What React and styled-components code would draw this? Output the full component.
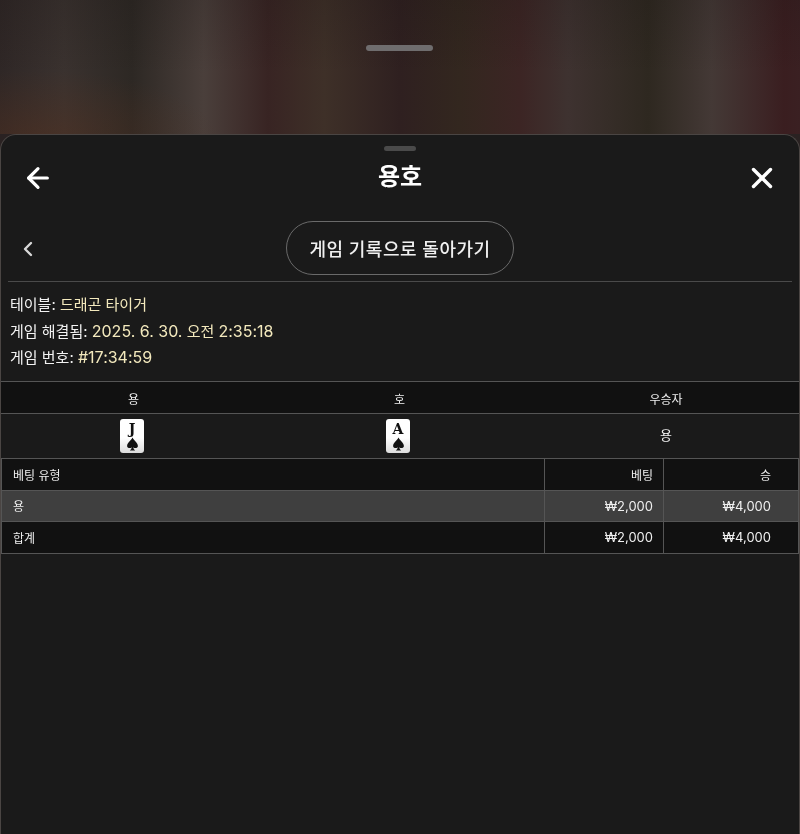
import React from 'react'
import styled, { createGlobalStyle } from 'styled-components'
import { ArrowLeft, ChevronLeft, X } from 'lucide-react'

const GlobalStyle = createGlobalStyle`
  * {
    box-sizing: border-box;
  }
  html, body {
    margin: 0;
    height: 100%;
    background: #1a1a1a;
  }
  body {
    font-family: Inter, "Noto Sans CJK KR", "Noto Sans", sans-serif;
    color: #fff;
    overflow: hidden;
  }
`

const Page = styled.div`
  width: 800px;
  height: 834px;
  display: flex;
  flex-direction: column;
  background: #2a2222;
`

const Backdrop = styled.div`
  height: 134px;
  padding-top: 45px;
  display: flex;
  justify-content: center;
  align-items: flex-start;
  background:
    radial-gradient(ellipse 180px 70px at 40px 140px, rgba(90, 50, 30, 0.45), transparent),
    linear-gradient(180deg, rgba(20, 15, 15, 0.16), transparent 55%),
    linear-gradient(
      90deg,
      #2f2726 0%,
      #3a322f 8%,
      #2d2824 16.5%,
      #4a3f3b 25.5%,
      #382423 33.5%,
      #3e3028 40.5%,
      #2f2020 50%,
      #33271f 57.5%,
      #3c2524 65%,
      #3e3230 71%,
      #2e2820 81%,
      #443936 89%,
      #3a1e20 98%,
      #3a2022 100%
    );
`

const Grabber = styled.div`
  width: ${(p) => p.$w}px;
  height: ${(p) => p.$h}px;
  margin-left: ${(p) => p.$shift || 0}px;
  border-radius: 3px;
  background: ${(p) => p.$color};
`

const Sheet = styled.section`
  flex: 1;
  display: flex;
  flex-direction: column;
  background: #1a1a1a;
  border: 1px solid #4a4543;
  border-bottom: 0;
  border-radius: 16px 16px 0 0;
  padding-top: 11px;
  will-change: transform;
`

const Handle = styled.div`
  display: flex;
  justify-content: center;
`

const Header = styled.header`
  height: 52px;
  padding: 2px 24px 0 24px;
  display: flex;
  align-items: center;
  justify-content: space-between;
  position: relative;
`

const Title = styled.h1`
  margin: 0;
  font-size: 24px;
  line-height: 32px;
  font-weight: 700;
  position: absolute;
  left: 0;
  right: 0;
  top: 10px;
  text-align: center;
  color: #fff;
`

const IconBtn = styled.button`
  width: 26px;
  height: 26px;
  padding: 0;
  border: 0;
  background: none;
  color: #fff;
  display: flex;
  align-items: center;
  justify-content: center;

  svg {
    flex-shrink: 0;
  }
`

const BackRow = styled.div`
  margin: 18px 7px 0;
  height: 61px;
  padding-bottom: 6px;
  border-bottom: 1px solid #4a4a4a;
  display: flex;
  align-items: center;
  justify-content: center;
  position: relative;
`

const Chevron = styled.span`
  position: absolute;
  left: 8px;
  top: 16px;
  color: #d8d8d8;
  display: flex;
`

const Pill = styled.button`
  width: 228px;
  height: 54px;
  padding: 4px 0 0;
  border: 1px solid #6a6a6a;
  border-radius: 27px;
  background: none;
  color: #f0f0f0;
  font: 500 18px/1 Inter, "Noto Sans CJK KR", sans-serif;
  letter-spacing: 0.5px;
`

const Info = styled.div`
  padding: 10px 9px 0;
  height: 99px;
`

const InfoLine = styled.p`
  margin: 0;
  font-size: 15px;
  line-height: 26.5px;
  color: #f2f2f2;
`

const Value = styled.span`
  color: #f3e9bd;
`

const Num = styled.span`
  font-size: 16px;
  line-height: 1;
`

const Table = styled.table`
  width: 100%;
  border-collapse: collapse;
  table-layout: fixed;
  font-size: 12px;
  color: #f0f0f0;
`

const RoundHead = styled.th`
  height: 32px;
  padding: 1px 0 0;
  font-weight: 400;
  background: #111;
  border-top: 1px solid #555;
  border-bottom: 1px solid #555;
`

const RoundCell = styled.td`
  height: 44px;
  padding: 0 ${(p) => (p.$card ? 3 : 0)}px 2px 0;
  text-align: center;
  font-size: 13px;
`

const CardRow = styled.div`
  display: flex;
  justify-content: center;
  padding-top: 2px;
`

const Card = styled.div`
  width: 24px;
  height: 34px;
  padding-top: 2px;
  border-radius: 3px;
  background: linear-gradient(180deg, #fff 55%, #dcdcdc 100%);
  color: #111;
  display: flex;
  flex-direction: column;
  align-items: center;
`

const Rank = styled.span`
  font: 700 14px/16px "DejaVu Serif", serif;
`

const Suit = styled.svg`
  width: 13px;
  height: 14px;
`

const BetCell = styled.td`
  height: ${(p) => p.$h || 31}px;
  padding: 0 ${(p) => (p.$wide ? 27 : p.$num ? 10 : 11)}px 0 11px;
  border: 1px solid #555;
  text-align: ${(p) => (p.$num ? 'right' : 'left')};
  font-size: ${(p) => (p.$amt ? 13 : 12)}px;
  background: ${(p) => (p.$active ? '#3f3f3f' : '#111')};
  color: #f0f0f0;
`

const Spade = () => (
  <Suit viewBox="0 0 24 26">
    <path
      fill="currentColor"
      d="M12 1C9 7 2 10.500 2 16.500c0 4 5.500 5.500 8.500 2.500-.3 2.800-1.500 4.600-3.500 6h10c-2-1.400-3.200-3.200-3.500-6 3 3 8.500 1.500 8.500-2.500C22 10.500 15 7 12 1z"
    />
  </Suit>
)

const PlayingCard = ({ rank }) => (
  <CardRow>
    <Card>
      <Rank>{rank}</Rank>
      <Spade />
    </Card>
  </CardRow>
)

const bets = [
  { name: '용', bet: '₩2,000', win: '₩4,000', active: true, h: 31 },
  { name: '합계', bet: '₩2,000', win: '₩4,000', h: 32 },
]

export default function App() {
  return (
    <Page>
      <GlobalStyle />
      <Backdrop>
        <Grabber $w={67} $h={6} $color="#6f6d6e" $shift={-1} />
      </Backdrop>
      <Sheet>
        <Handle>
          <Grabber $w={32} $h={5} $color="#4a4a4a" />
        </Handle>
        <Header>
          <IconBtn>
            <ArrowLeft size={32} strokeWidth={2.4} />
          </IconBtn>
          <Title>용호</Title>
          <IconBtn>
            <X size={34} strokeWidth={2.4} />
          </IconBtn>
        </Header>
        <BackRow>
          <Chevron>
            <ChevronLeft size={24} strokeWidth={2.4} />
          </Chevron>
          <Pill>게임 기록으로 돌아가기</Pill>
        </BackRow>
        <Info>
          <InfoLine>
            테이블: <Value>드래곤 타이거</Value>
          </InfoLine>
          <InfoLine>
            게임 해결됨: <Value><Num>2025. 6. 30.</Num> 오전 <Num>2:35:18</Num></Value>
          </InfoLine>
          <InfoLine>
            게임 번호: <Value><Num>#17:34:59</Num></Value>
          </InfoLine>
        </Info>
        <Table>
          <colgroup>
            <col style={{ width: 265 }} />
            <col style={{ width: 267 }} />
            <col />
          </colgroup>
          <thead>
            <tr>
              <RoundHead>용</RoundHead>
              <RoundHead>호</RoundHead>
              <RoundHead>우승자</RoundHead>
            </tr>
          </thead>
          <tbody>
            <tr>
              <RoundCell $card>
                <PlayingCard rank="J" />
              </RoundCell>
              <RoundCell $card>
                <PlayingCard rank="A" />
              </RoundCell>
              <RoundCell>용</RoundCell>
            </tr>
          </tbody>
        </Table>
        <Table>
          <colgroup>
            <col />
            <col style={{ width: 119 }} />
            <col style={{ width: 135 }} />
          </colgroup>
          <tbody>
            <tr>
              <BetCell $h={32}>베팅 유형</BetCell>
              <BetCell $num>베팅</BetCell>
              <BetCell $num $wide>승</BetCell>
            </tr>
            {bets.map((b) => (
              <tr key={b.name}>
                <BetCell $active={b.active} $h={b.h}>{b.name}</BetCell>
                <BetCell $num $amt $active={b.active}>{b.bet}</BetCell>
                <BetCell $num $amt $wide $active={b.active}>{b.win}</BetCell>
              </tr>
            ))}
          </tbody>
        </Table>
      </Sheet>
    </Page>
  )
}
